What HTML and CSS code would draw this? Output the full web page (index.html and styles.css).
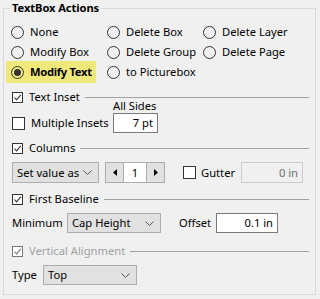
FILE: index.html
```html
<!DOCTYPE html>
<html lang="en">
<head>
  <meta charset="UTF-8" />
  <title>TextBox Actions</title>
  <link rel="stylesheet" href="styles.css">
</head>
<body>
  <div class="group">
    <div class="group-title">TextBox Actions</div>

    <div class="radio-grid">
      <label class="radio"><span class="dot"></span>None</label>
      <label class="radio"><span class="dot"></span>Delete Box</label>
      <label class="radio"><span class="dot"></span>Delete Layer</label>
      <label class="radio"><span class="dot"></span>Modify Box</label>
      <label class="radio"><span class="dot"></span>Delete Group</label>
      <label class="radio"><span class="dot"></span>Delete Page</label>
      <label class="radio radio-hl"><span class="dot on"></span>Modify Text</label>
      <label class="radio"><span class="dot"></span>to Picturebox</label>
    </div>

    <div class="section">
      <span class="check"><svg width="9" height="9" viewBox="0 0 9 9"><polyline points="1.5,4.5 3.5,6.8 7.8,1.8" /></svg></span>
      <span class="section-label">Text Inset</span>
      <span class="rule"></span>
    </div>

    <div class="inset-row">
      <div class="inset-left">
        <span class="box"></span>
        <span class="box-label">Multiple Insets</span>
      </div>
      <div class="inset-col">
        <div class="small-label">All Sides</div>
        <div class="field">7 pt</div>
      </div>
    </div>

    <div class="section">
      <span class="check"><svg width="9" height="9" viewBox="0 0 9 9"><polyline points="1.5,4.5 3.5,6.8 7.8,1.8" /></svg></span>
      <span class="section-label">Columns</span>
      <span class="rule"></span>
    </div>

    <div class="row row-tall">
      <div class="combo combo-set">
        <span>Set value as</span>
        <svg class="chev" width="9" height="5" viewBox="0 0 9 5"><polyline points="0.5,0.5 4.5,4.5 8.5,0.5" /></svg>
      </div>
      <div class="spinner">
        <span class="spin-btn"><svg width="4" height="7" viewBox="0 0 4 7"><polygon points="4,0 0,3.5 4,7" /></svg></span>
        <span class="spin-val">1</span>
        <span class="spin-btn"><svg width="4" height="7" viewBox="0 0 4 7"><polygon points="0,0 4,3.5 0,7" /></svg></span>
      </div>
      <div class="gutter">
        <span class="box"></span>
        <span class="gutter-label">Gutter</span>
      </div>
      <div class="field field-off">0 in</div>
    </div>

    <div class="section">
      <span class="check"><svg width="9" height="9" viewBox="0 0 9 9"><polyline points="1.5,4.5 3.5,6.8 7.8,1.8" /></svg></span>
      <span class="section-label">First Baseline</span>
      <span class="rule"></span>
    </div>

    <div class="row">
      <span class="row-label label-min">Minimum</span>
      <div class="combo combo-wide">
        <span>Cap Height</span>
        <svg class="chev" width="9" height="5" viewBox="0 0 9 5"><polyline points="0.5,0.5 4.5,4.5 8.5,0.5" /></svg>
      </div>
      <span class="row-label label-offset">Offset</span>
      <div class="field field-offset">0.1 in</div>
    </div>

    <div class="section section-off">
      <span class="check"><svg width="9" height="9" viewBox="0 0 9 9"><polyline points="1.5,4.5 3.5,6.8 7.8,1.8" /></svg></span>
      <span class="section-label">Vertical Alignment</span>
      <span class="rule"></span>
    </div>

    <div class="row">
      <span class="row-label label-type">Type</span>
      <div class="combo combo-wide">
        <span>Top</span>
        <svg class="chev" width="9" height="5" viewBox="0 0 9 5"><polyline points="0.5,0.5 4.5,4.5 8.5,0.5" /></svg>
      </div>
    </div>
  </div>
</body>
</html>
```

FILE: styles.css
```css
body {
  margin: 0;
  background: #f0f0f0;
  font-family: "Segoe UI", "Noto Sans", sans-serif;
  font-size: 11.2px;
  line-height: 16px;
  color: #000;
}

.group {
  margin: 8px 4px 0 3px;
  border: 1px solid #d9d9d9;
  padding: 0 6px 9px 7px;
}

.group-title {
  display: table;
  margin: -9px 0 0 -1px;
  padding: 0 2px;
  background: #f0f0f0;
  font-weight: bold;
  letter-spacing: -0.1px;
}

.radio-grid {
  display: grid;
  grid-template-columns: 96px 96px 96px;
  grid-auto-rows: 20px;
  margin-top: 6px;
}

.radio {
  display: flex;
  align-items: center;
  gap: 6px;
  white-space: nowrap;
}

.dot {
  flex: none;
  width: 13px;
  height: 13px;
  box-sizing: border-box;
  border: 1px solid #333;
  border-radius: 50%;
  display: flex;
  align-items: center;
  justify-content: center;
}

.dot.on::after {
  content: "";
  width: 7px;
  height: 7px;
  border-radius: 50%;
  background: #333;
}

.radio-hl {
  width: 90px;
  box-sizing: border-box;
  margin: -1px 0 -1px -5px;
  padding-left: 5px;
  background: #f1e87c;
  font-weight: bold;
  letter-spacing: -0.3px;
}

.section {
  display: flex;
  align-items: center;
  height: 16px;
  margin-top: 7px;
  padding-left: 1px;
}

.check {
  flex: none;
  width: 11px;
  height: 11px;
  box-sizing: border-box;
  border: 1px solid #333;
  background: #fff;
  display: flex;
  align-items: center;
  justify-content: center;
}

.check svg polyline {
  fill: none;
  stroke: #333;
  stroke-width: 1.1;
}

.section-label {
  margin-left: 6px;
  white-space: nowrap;
}

.rule {
  flex: 1;
  height: 1px;
  margin-left: 5px;
  background: #a0a0a0;
}

.section-off .section-label {
  color: #a0a0a0;
}

.section-off .check {
  border-color: #777;
}

.section-off .check svg polyline {
  stroke: #777;
}

.inset-row {
  display: flex;
  align-items: flex-end;
  margin-top: -6px;
}

.inset-left {
  width: 102px;
  height: 20px;
  box-sizing: border-box;
  padding-left: 1px;
  display: flex;
  align-items: center;
}

.box {
  flex: none;
  width: 13px;
  height: 13px;
  box-sizing: border-box;
  border: 1px solid #333;
  background: #fff;
}

.box-label {
  margin-left: 6px;
  white-space: nowrap;
}

.inset-col {
  width: 45px;
}

.small-label {
  line-height: 14px;
  white-space: nowrap;
}

.field {
  height: 20px;
  box-sizing: border-box;
  border: 1px solid #7a7a7a;
  background: #fff;
  text-align: right;
  padding-right: 4px;
  line-height: 18px;
}

.field-off {
  width: 62px;
  height: 21px;
  line-height: 19px;
  border-color: #cccccc;
  background: #f0f0f0;
  color: #6d6d6d;
}

.field-offset {
  width: 62px;
}

.row {
  display: flex;
  align-items: center;
  margin-top: 6px;
  padding-left: 1px;
}

.row-tall + .section,
.row + .section {
  margin-top: 8px;
}

.row + .section-off {
  margin-top: 10px;
}

.combo {
  flex: none;
  height: 20px;
  box-sizing: border-box;
  border: 1px solid #adadad;
  background: #e1e1e1;
  display: flex;
  align-items: center;
  justify-content: space-between;
  padding: 0 6px 0 4px;
  white-space: nowrap;
}

.row-tall .combo {
  height: 21px;
}

.chev polyline {
  fill: none;
  stroke: #555;
  stroke-width: 1;
}

.combo-set {
  width: 87px;
}

.combo-wide {
  width: 94px;
}

.spinner {
  flex: none;
  display: flex;
  width: 60px;
  height: 21px;
  box-sizing: border-box;
  margin-left: 6px;
  border: 1px solid #adadad;
  background: #e1e1e1;
}

.spin-btn {
  width: 17px;
  display: flex;
  align-items: center;
  justify-content: center;
}

.spin-btn polygon {
  fill: #000;
}

.spin-val {
  flex: 1;
  background: #fff;
  border-left: 1px solid #adadad;
  border-right: 1px solid #adadad;
  text-align: center;
  line-height: 19px;
}

.gutter {
  width: 58px;
  margin-left: 18px;
  display: flex;
  align-items: center;
}

.gutter-label {
  margin-left: 5px;
}

.row-label {
  white-space: nowrap;
}

.label-min {
  width: 55px;
}

.label-offset {
  width: 37px;
  margin-left: 18px;
}

.label-type {
  width: 31px;
}
```
